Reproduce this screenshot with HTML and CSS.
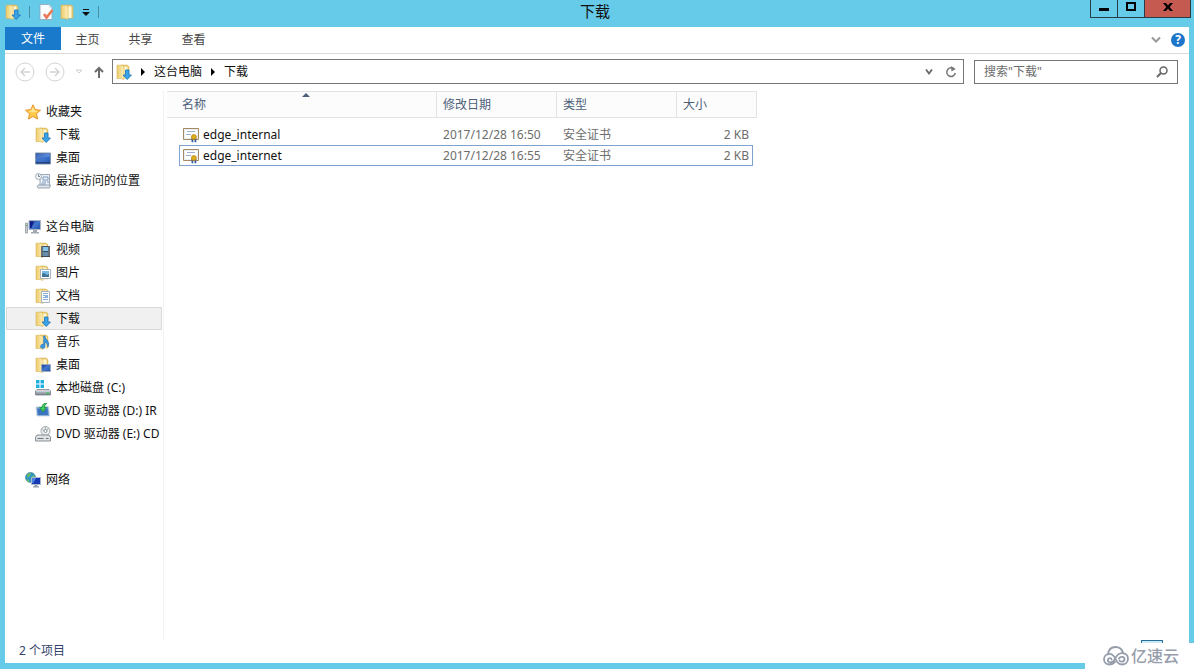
FILE: index.html
```html
<!DOCTYPE html>
<html lang="zh-CN">
<head>
<meta charset="utf-8">
<title>下载</title>
<link rel="stylesheet" href="styles.css">
</head>
<body>
<svg class="defs" aria-hidden="true">
  <defs>
    <linearGradient id="gold" x1="0" x2="1" y1="0" y2="0"><stop offset="0" stop-color="#eccb6c"/><stop offset="1" stop-color="#fdf0b8"/></linearGradient>
    <linearGradient id="blue" x1="0" x2="1" y1="0" y2="1"><stop offset="0" stop-color="#173a8c"/><stop offset="0.5" stop-color="#4377cf"/><stop offset="1" stop-color="#1f50ab"/></linearGradient>
    <linearGradient id="steel" x1="0" x2="0" y1="0" y2="1"><stop offset="0" stop-color="#d3d8de"/><stop offset="1" stop-color="#7d8894"/></linearGradient>
    <symbol id="folder" viewBox="0 0 16 16">
      <path d="M5 1h6l2 1.500V14H5z" fill="#e6c468" stroke="#d9b455" stroke-width=".5"/>
      <path d="M8 2.500h3.500V14H8z" fill="#fff6d2"/>
      <path d="M1 1.200h5.500l1.500 2V15.500l-3-1H1z" fill="url(#gold)" stroke="#d9b455" stroke-width=".6"/>
    </symbol>
    <symbol id="download" viewBox="0 0 16 16">
      <use href="#folder"/>
      <path d="M9.500 6h3.500v5h2.500L11.200 15.500 7 11h2.500z" fill="#39a5e8" stroke="#1772b9" stroke-width=".8"/>
    </symbol>
    <symbol id="star" viewBox="0 0 16 16">
      <path d="M8 .8l2.200 4.800 5.300.6-4 3.600 1.100 5.300L8 12.500l-4.600 2.600 1.100-5.300-4-3.600 5.300-.6z" fill="#fdc94a" stroke="#e38d21" stroke-width=".9"/>
      <path d="M8 3l1.500 3.400 3.500.5-5 1.500-4.500-1.500L6.500 6.400z" fill="#ffe79a"/>
    </symbol>
    <symbol id="desktop" viewBox="0 0 16 16">
      <path d="M.5 3h15v11H.5z" fill="url(#blue)" stroke="#8194ae"/>
      <path d="M1 12h14v1.500H1z" fill="#23427d"/><path d="M1 4h14v3Q7 6 1 11z" fill="#7aa6e8" opacity=".35"/>
    </symbol>
    <symbol id="recent" viewBox="0 0 16 16">
      <path d="M5 1.500h9.500v11H5z" fill="#edf2f8" stroke="#8593a3" stroke-width=".8"/>
      <path d="M3 12h12.500l-1 3H3q-1.500-1.500 0-3z" fill="#dce2e8" stroke="#8996a4" stroke-width=".8"/>
      <path d="M8 4h5v3H8zM7 9h4M12 9h2M6 11h5" fill="none" stroke="#7d9abf"/>
      <circle cx="3.500" cy="3.500" r="3" fill="#f2f5f8" stroke="#8e99a5" stroke-width=".8"/><path d="M3.500 1.500v2H5" fill="none" stroke="#59687a" stroke-width=".8"/>
    </symbol>
    <symbol id="computer" viewBox="0 0 16 16">
      <path d="M.5 4h2v10h-2z" fill="#c7ccd1" stroke="#88919b" stroke-width=".7"/><path d="M1 6h1v1H1z" fill="#36ac3b"/>
      <path d="M4 1.500h11.500v9H4z" fill="url(#blue)" stroke="#a9b5c4"/>
      <path d="M5 2.500h4L6.500 9H5z" fill="#101c88"/><path d="M8 11h4v2h2v1.500H6V13h2z" fill="#a2a9b1"/>
    </symbol>
    <symbol id="video" viewBox="0 0 16 16">
      <use href="#folder"/><path d="M6 4h9v11H6z" fill="#3f4b57"/><path d="M8 5h5v4H8z" fill="#86c5e9"/><path d="M8 10h5v4H8z" fill="#678dac"/>
      <path d="M7 4.500v10M14 4.500v10" stroke="#edf1f4" stroke-width=".9" stroke-dasharray="1 1"/>
    </symbol>
    <symbol id="picture" viewBox="0 0 16 16">
      <use href="#folder"/><path d="M5.500 4.500h10v9h-10z" fill="#fff" stroke="#92a3b4" stroke-width=".8"/><path d="M7 6h7v6H7z" fill="#79b9e4"/><path d="M7 12V9l2-1 3 2 2-1v3z" fill="#3d7593"/>
    </symbol>
    <symbol id="document" viewBox="0 0 16 16">
      <use href="#folder"/><path d="M6.500 3.500h8v11h-8z" fill="#fafcff" stroke="#95a5b7" stroke-width=".8"/><path d="M8 5.500h5M8 7.500h5M8 9.500h5M8 11.500h5" stroke="#6d98c7" stroke-width=".8"/><path d="M10 7h3v3h-3z" fill="#8cb2da"/>
    </symbol>
    <symbol id="music" viewBox="0 0 16 16">
      <use href="#folder"/><path d="M10 2q0 2.500 2 4 3 3 1 7-.3-4-3-5v4.500a2.200 2 0 1 1-1.300-2V2z" fill="#3b9ae3" stroke="#1d6cb3" stroke-width=".6"/>
    </symbol>
    <symbol id="deskfolder" viewBox="0 0 16 16">
      <use href="#folder"/><path d="M6.500 7.500h9v7h-9z" fill="url(#blue)" stroke="#9babbc" stroke-width=".9"/>
    </symbol>
    <symbol id="disk" viewBox="0 0 16 16">
      <path d="M1 0h3.500v3.500H1zM5.500 0H9v3.500H5.500zM1 4.500h3.500V8H1zM5.500 4.500H9V8H5.500z" fill="#1fafe7"/>
      <path d="M2 9.500h12l1.500 1.500v4H.5v-4z" fill="url(#steel)" stroke="#68747f" stroke-width=".7"/><path d="M1 11h14" stroke="#edf1f4" stroke-width=".6"/><path d="M11.500 12.500H14V14h-2.500z" fill="#38c645"/>
    </symbol>
    <symbol id="dvdinstall" viewBox="0 0 16 16">
      <path d="M1 4l12.500-.5 1 9.500H2z" fill="#6a9bd2" stroke="#ccd6df" stroke-width=".8"/><path d="M2.500 6l10-.5.500 6.500H3z" fill="#3d74c0"/>
      <path d="M12 0q-5 0-5 4.500H4.500L8 9l3.500-4.500H9.500Q9.500 2 12 0z" fill="#3ecc57" stroke="#15883b" stroke-width=".7"/>
    </symbol>
    <symbol id="dvd" viewBox="0 0 16 16">
      <circle cx="10.500" cy="5" r="4.500" fill="#edf0ef" stroke="#8b9598" stroke-width=".8"/><path d="M10.500 1v3M7 3l2 1.500M13.500 2L12 4" stroke="#a3b2b6"/><circle cx="10.500" cy="5" r="1.500" fill="#fff" stroke="#87969b"/>
      <path d="M2 9h12l1.500 2v4H.5v-4z" fill="#dfe2e5" stroke="#707a82" stroke-width=".8"/><path d="M2.500 12.500h6M11 12.500h2.500" stroke="#70787e"/>
    </symbol>
    <symbol id="network" viewBox="0 0 16 16">
      <circle cx="5.500" cy="5.500" r="5" fill="#2f94c7" stroke="#447887" stroke-width=".6"/><path d="M2 2.500q2-2 4-1.500L5 4 2.500 6zM6 5l3-2 1 3-3 3zM1 7l3 1v2q-2-.5-3-3z" fill="#67be69"/>
      <path d="M6.500 5.500h9v7h-9z" fill="#1538b5" stroke="#aab8cb"/><path d="M7 6h4L8.500 11H7z" fill="#4c80df"/><path d="M9.500 13h3v1.200h1.500v1.300H8v-1.300h1.500z" fill="#929da9"/>
    </symbol>
    <symbol id="cert" viewBox="0 0 16 16">
      <path d="M.5 1.500h15v11H.5z" fill="#fff" stroke="#a58962"/><path d="M1.500 2.500h13v9h-13z" fill="none" stroke="#dfe5ef" stroke-width=".7"/>
      <path d="M4 4.500h8M3 7.500h5" stroke="#8798c5" stroke-width=".8"/>
      <path d="M8.500 11h1.800v4.500l-1.800-.5zM11.500 11h1.800v4.500l-1.800-.5z" fill="#3d5c9e"/><circle cx="10.900" cy="10" r="2.500" fill="#dcae1c" stroke="#b47f0a" stroke-width=".7"/>
    </symbol>
    <symbol id="props" viewBox="0 0 16 16">
      <path d="M2 .5h9l3 3v12H2z" fill="#fafdff" stroke="#91a6b6" stroke-width=".8"/><path d="M11 .5v3h3z" fill="#c9d6e0"/><path d="M6 10l2.500 3.500L14.500 6" fill="none" stroke="#ea7856" stroke-width="2.600"/>
    </symbol>
  </defs>
</svg>
<div class="window">
  <header class="titlebar">
    <div class="quick">
      <svg class="icon"><use href="#download"/></svg>
      <span class="sep"></span>
      <button class="plain" aria-label="属性"><svg class="icon"><use href="#props"/></svg></button>
      <button class="plain" aria-label="新建文件夹"><svg class="icon"><use href="#folder"/></svg></button>
      <button class="plain" aria-label="自定义快速访问工具栏"><svg width="8" height="8" viewBox="0 0 8 8"><path d="M1 1h6v1H1zM0 4h8L4 8z" fill="#111"/></svg></button>
      <span class="sep"></span>
    </div>
    <h1 class="title">下载</h1>
    <div class="controls">
      <button class="control" aria-label="最小化"><svg width="10" height="10"><path d="M0 6h10v3H0z"/></svg></button>
      <button class="control" aria-label="最大化"><svg width="10" height="10"><path d="M1 1h8v7H1z" fill="none" stroke="#000" stroke-width="2"/></svg></button>
      <button class="control close" aria-label="关闭"><svg width="10" height="10"><path d="M0 1h3l2 2.500L7 1h3L6.700 5 10 9H7L5 6.500 3 9H0l3.300-4z"/></svg></button>
    </div>
  </header>
  <div class="client">
    <nav class="ribbon">
      <button class="tab file">文件</button>
      <button class="tab">主页</button>
      <button class="tab">共享</button>
      <button class="tab">查看</button>
      <div class="ribbon-end">
        <button class="plain" aria-label="展开功能区"><svg width="10" height="8"><path d="M1 1.500l4 4 4-4" fill="none" stroke="#999" stroke-width="2"/></svg></button>
        <button class="help" aria-label="帮助">?</button>
      </div>
    </nav>
    <div class="navrow">
      <div class="history">
        <button class="plain" aria-label="后退"><svg width="20" height="20" fill="none" stroke="#d4d4d4" stroke-width="1.500"><circle cx="10" cy="10" r="9" stroke-width="1"/><path d="M15 10H6M10 6l-4 4 4 4"/></svg></button>
        <button class="plain" aria-label="前进"><svg width="20" height="20" fill="none" stroke="#d4d4d4" stroke-width="1.500"><circle cx="10" cy="10" r="9" stroke-width="1"/><path d="M5 10h9M10 6l4 4-4 4"/></svg></button>
        <button class="plain" aria-label="最近位置"><svg width="8" height="6"><path d="M1 1h6L4 4z" fill="none" stroke="#d0d0d0"/></svg></button>
        <button class="plain" aria-label="上移"><svg width="12" height="12"><path d="M6 12V2M2 6l4-4 4 4" fill="none" stroke="#6b6b6b" stroke-width="2"/></svg></button>
      </div>
      <div class="address">
        <svg class="icon"><use href="#download"/></svg>
        <svg class="arrow" width="4" height="8"><path d="M0 0l4 4-4 4z"/></svg>
        <button class="crumb">这台电脑</button>
        <svg class="arrow" width="4" height="8"><path d="M0 0l4 4-4 4z"/></svg>
        <button class="crumb">下载</button>
        <div class="address-end">
          <button class="plain" aria-label="历史地址"><svg width="8" height="8"><path d="M1 1.500l3 4 3-4" fill="none" stroke="#666" stroke-width="1.800"/></svg></button>
          <button class="plain" aria-label="刷新"><svg width="12" height="12" viewBox="0 0 12 12"><path d="M9.500 3.500A4.300 4.300 0 1 0 10.300 7" fill="none" stroke="#777" stroke-width="1.500"/><path d="M6 0l4.500 3L6.500 5.500z" fill="#777"/></svg></button>
        </div>
      </div>
      <label class="search">
        <input class="search-input" type="search" placeholder='搜索"下载"' aria-label="搜索">
        <svg width="12" height="12" fill="none" stroke="#666"><circle cx="7.500" cy="4.500" r="3.500" stroke-width="1.500"/><path d="M5 7L1 11" stroke-width="2"/></svg>
      </label>
    </div>
    <div class="content">
      <aside class="sidebar">
        <ul class="tree">
          <li><a class="node root" href="#"><svg class="icon"><use href="#star"/></svg>收藏夹</a></li>
          <li><a class="node" href="#"><svg class="icon"><use href="#download"/></svg>下载</a></li>
          <li><a class="node" href="#"><svg class="icon"><use href="#desktop"/></svg>桌面</a></li>
          <li><a class="node" href="#"><svg class="icon"><use href="#recent"/></svg>最近访问的位置</a></li>
        </ul>
        <ul class="tree">
          <li><a class="node root" href="#"><svg class="icon"><use href="#computer"/></svg>这台电脑</a></li>
          <li><a class="node" href="#"><svg class="icon"><use href="#video"/></svg>视频</a></li>
          <li><a class="node" href="#"><svg class="icon"><use href="#picture"/></svg>图片</a></li>
          <li><a class="node" href="#"><svg class="icon"><use href="#document"/></svg>文档</a></li>
          <li><a class="node current" href="#"><svg class="icon"><use href="#download"/></svg>下载</a></li>
          <li><a class="node" href="#"><svg class="icon"><use href="#music"/></svg>音乐</a></li>
          <li><a class="node" href="#"><svg class="icon"><use href="#deskfolder"/></svg>桌面</a></li>
          <li><a class="node" href="#"><svg class="icon"><use href="#disk"/></svg>本地磁盘 (C:)</a></li>
          <li><a class="node" href="#"><svg class="icon"><use href="#dvdinstall"/></svg>DVD 驱动器 (D:) IR</a></li>
          <li><a class="node" href="#"><svg class="icon"><use href="#dvd"/></svg>DVD 驱动器 (E:) CD</a></li>
        </ul>
        <ul class="tree">
          <li><a class="node root" href="#"><svg class="icon"><use href="#network"/></svg>网络</a></li>
        </ul>
      </aside>
      <main class="files">
        <table class="list">
          <colgroup><col class="c-edge"><col class="c-name"><col class="c-mid"><col class="c-mid"><col class="c-size"><col class="c-end"></colgroup>
          <thead>
            <tr><th class="name" colspan="2" aria-sort="ascending">名称<svg class="sort" width="8" height="4"><path d="M0 4l4-4 4 4z" fill="#4c607a"/></svg></th><th>修改日期</th><th>类型</th><th colspan="2">大小</th></tr>
          </thead>
          <tbody>
            <tr class="lead"><td colspan="6"></td></tr>
            <tr><td></td><td class="name"><span class="filename"><svg class="icon"><use href="#cert"/></svg>edge_internal</span></td><td>2017/12/28 16:50</td><td>安全证书</td><td class="size">2 KB</td><td></td></tr>
            <tr class="focused"><td></td><td class="name"><span class="filename"><svg class="icon"><use href="#cert"/></svg>edge_internet</span></td><td>2017/12/28 16:55</td><td>安全证书</td><td class="size">2 KB</td><td></td></tr>
          </tbody>
        </table>
      </main>
    </div>
    <footer class="status"><span>2 个项目</span><button class="view" aria-label="详细信息"></button></footer>
  </div>
  <div class="brand">
    <svg width="26" height="20" viewBox="0 0 26 20" fill="none" stroke="#969dab" stroke-width="1.800" stroke-linecap="round"><path d="M5 8.500C5.500 3.500 8.500 1 12.500 1 16.500 1 19 3 20 7"/><path d="M8.500 13.500C8.500 11.500 5 11.500 4.800 14 4.700 17 9.500 17 11 14.500 13 11 14.500 7 19 7.200 23 7.500 25 10 25 12.800 25 16 22.500 18.500 19 18.500 14.500 18.500 13.500 15 12 12 10.500 9 9 7.800 6.500 7.800 3 7.800 1 10.500 1 13.300 1 16.300 3.500 18.500 6.500 18.500 9 18.500 10.500 17.500 12 16"/><path d="M16.500 14.500C17 16 21.500 16.500 21.500 13 21.500 10.500 17.500 10 16 12.500"/></svg>
    <span>亿速云</span>
  </div>
</div>
</body>
</html>
```
FILE: styles.css
```css
* { box-sizing: border-box; }

body {
  margin: 0;
  font: 12px/16px "Noto Sans", "Open Sans", "Noto Sans CJK SC", sans-serif;
  color: #111;
}

button { font: inherit; color: inherit; border: 0; background: none; padding: 0; }
svg { display: block; flex: none; }
.defs { position: absolute; width: 0; height: 0; }
.icon { width: 16px; height: 16px; }
.plain { display: flex; align-items: center; }

.window {
  position: relative;
  display: flex;
  flex-direction: column;
  min-height: 100vh;
  padding: 0 5px 6px;
  background: #66cae9;
}

.titlebar {
  display: grid;
  grid-template-columns: 1fr auto 1fr;
  height: 27px;
  margin: 0 -2px 0 -6px;
}
.quick { display: flex; align-items: center; gap: 6px; height: 24px; padding-left: 6px; }
.quick .sep { width: 1px; height: 12px; margin: 0 2px; background: #4a8fa8; }
.title { margin: 0; font-size: 15px; line-height: 23px; font-weight: 400; }
.controls { display: flex; justify-content: flex-end; }
.control {
  display: flex;
  justify-content: center;
  width: 28px;
  height: 18px;
  padding-top: 2px;
  border: 1px solid #263c46;
  border-top: 0;
  margin-left: -1px;
}
.close { width: 47px; background: #c55a50; }

.client { flex: 1; display: flex; flex-direction: column; background: #fff; }

.ribbon { display: flex; height: 27px; border-bottom: 1px solid #dadbdc; }
.tab { width: 53px; color: #444; }
.file { width: 56px; height: 23px; background: #1979ca; color: #fff; }
.ribbon-end { display: flex; align-items: center; gap: 10px; margin-left: auto; padding-right: 4px; }
.help {
  width: 14px;
  height: 14px;
  border-radius: 50%;
  background: #1c75c9;
  color: #fff;
  font-weight: 700;
  line-height: 14px;
}

.navrow { display: flex; align-items: center; padding: 5px 11px 7px 10px; }
.history { display: flex; align-items: center; gap: 10px; width: 97px; }
.address {
  flex: 1;
  display: flex;
  align-items: center;
  gap: 9px;
  height: 25px;
  padding: 0 6px 0 3px;
  border: 1px solid #777;
}
.address-end { display: flex; gap: 12px; margin-left: auto; }
.search {
  display: flex;
  align-items: center;
  width: 204px;
  height: 24px;
  margin-left: 10px;
  padding: 0 9px;
  border: 1px solid #777;
}
.search-input { flex: 1; min-width: 0; padding: 0; border: 0; outline: 0; font: inherit; }
.search-input::placeholder { color: #6d6d6d; }

.content { flex: 1; display: flex; }
.sidebar { width: 159px; padding: 9px 1px 0 1px; border-right: 1px solid #f3f3f3; }
.tree { list-style: none; margin: 0 0 23px; padding: 0; }
.node {
  display: flex;
  align-items: center;
  gap: 5px;
  height: 23px;
  padding-left: 28px;
  border: 1px solid transparent;
  color: #111;
  text-decoration: none;
  white-space: nowrap;
  overflow: hidden;
}
.root { padding-left: 18px; }
.current { background: #f0f0f0; border-color: #dadada; }

.files { flex: 1; padding-left: 3px; }
.list { width: 590px; table-layout: fixed; border-collapse: separate; border-spacing: 0; }
.c-edge { width: 12px; }
.c-name { width: 258px; }
.c-mid { width: 120px; }
.c-size { width: 76px; }
.c-end { width: 4px; }
.list th {
  position: relative;
  height: 27px;
  padding: 0 6px;
  border: solid #e2e3e5;
  border-width: 1px 1px 1px 0;
  background: #fcfcfc;
  color: #4c607a;
  font-weight: 400;
  text-align: left;
}
.list th.name { padding-left: 15px; }
.sort { position: absolute; top: 1px; left: 50%; }
.list .lead td { height: 6px; }
.list td { height: 21px; padding: 0; color: #6d6d6d; border: solid transparent; border-width: 1px 0; }
.list td + td { padding-left: 6px; }
.list td:last-child { padding: 0; }
.list td.name { padding-left: 3px; color: #111; border-left-width: 1px; }
.list td.size { padding-right: 3px; text-align: right; border-right-width: 1px; }
.filename { display: flex; align-items: center; gap: 4px; }
.focused td:not(:first-child):not(:last-child) { border-color: #7da2ce; }

.status {
  display: flex;
  justify-content: space-between;
  height: 24px;
  padding: 1px 26px 0 14px;
  line-height: 22px;
  color: #33436b;
}
.view { width: 22px; height: 20px; border: 1px solid #26709c; background: #cbe8f6; }

.brand {
  position: absolute;
  right: 0;
  bottom: 0;
  display: flex;
  align-items: center;
  gap: 2px;
  width: 109px;
  height: 26px;
  padding-left: 18px;
  background: #fff;
  color: #969dab;
  font-size: 16px;
  font-weight: 500;
}
```
